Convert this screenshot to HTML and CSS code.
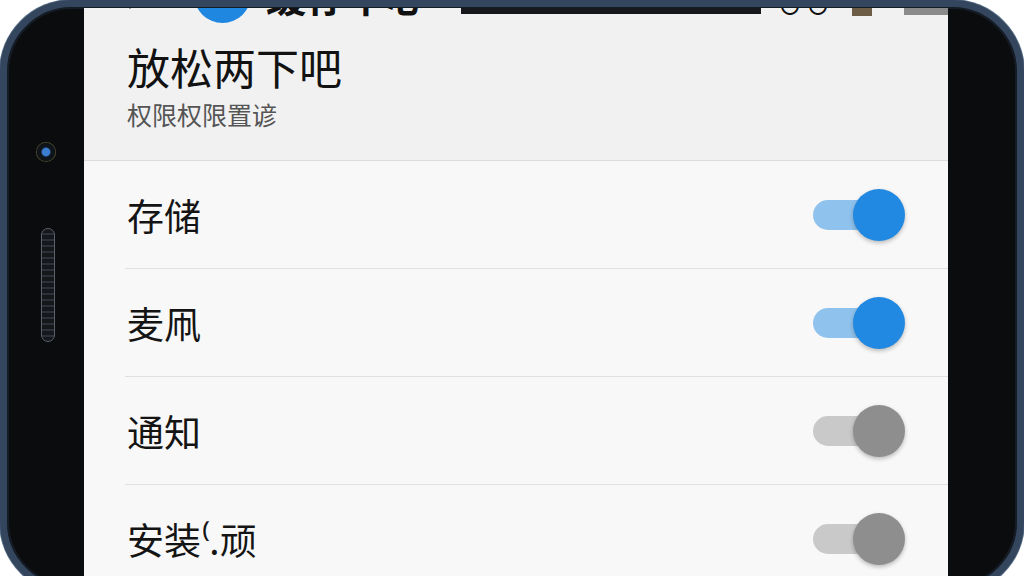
FILE: index.html
```html
<!DOCTYPE html>
<html lang="zh-CN">
<head>
    <meta charset="UTF-8">
    <meta name="viewport" content="width=device-width, initial-scale=1.0">
    <title>权限设置</title>
    <link rel="stylesheet" href="styles.css">
</head>
<body>

    <div class="phone">
        <div class="camera"></div>
        <div class="speaker"></div>

        <div class="screen">
            <div class="status-bar">
                <span class="status-arrow"></span>
                <span class="status-dot"></span>
                <span class="status-title">缓存中心</span>
                <span class="status-strip"></span>
                <span class="status-icons">∪∪</span>
                <span class="status-batt"></span>
                <span class="status-grey"></span>
            </div>

            <div class="header">
                <h1 class="title">放松两下吧</h1>
                <p class="subtitle">权限权限置谚</p>
            </div>

            <ul class="perm-list">
                <li class="perm-row">
                    <span class="perm-name">存储</span>
                    <span class="toggle on"><span class="knob"></span></span>
                </li>
                <li class="perm-row">
                    <span class="perm-name">麦凧</span>
                    <span class="toggle on"><span class="knob"></span></span>
                </li>
                <li class="perm-row">
                    <span class="perm-name">通知</span>
                    <span class="toggle"><span class="knob"></span></span>
                </li>
                <li class="perm-row">
                    <span class="perm-name">安装⁽.顽</span>
                    <span class="toggle"><span class="knob"></span></span>
                </li>
            </ul>
        </div>
    </div>

</body>
</html>
```

FILE: styles.css
```css
html, body { margin: 0; height: 100%; overflow: hidden; background: #ffffff; }
body { font-family: "Noto Sans CJK SC", "Noto Sans", sans-serif; }

/* device */
.phone {
    position: relative;
    box-sizing: border-box;
    width: 1024px;
    height: 594px;
    border: 7px solid #33465d;
    border-radius: 72px;
    background: #0b0c0e;
    box-shadow: inset 0 0 0 2px #151c25, 0 0 0 1px #5a7088;
    padding: 1px 69px 0 77px;
    display: flex;
}
.camera {
    position: absolute;
    left: 29px; top: 135px;
    width: 20px; height: 20px;
    border-radius: 50%;
    background: radial-gradient(circle, #3a7cd0 0 26%, #0f141b 36% 62%, #7a7038 72% 84%, #1d1d18 96%);
}
.speaker {
    position: absolute;
    left: 34px; top: 221px;
    width: 12px; height: 112px;
    border-radius: 7px;
    border: 1px solid #5b616b;
    background: repeating-linear-gradient(0deg, #15171b 0 4px, #2c3038 4px 6px);
}

/* screen */
.screen {
    flex: 1;
    overflow: hidden;
    background: #f8f8f8;
    display: flex;
    flex-direction: column;
}
.status-bar {
    position: relative;
    z-index: 1;
    height: 8px;
    display: flex;
    align-items: flex-end;
    padding-left: 40px;
    background: #f1f1f1;
}
.status-arrow { width: 0; height: 0; margin-bottom: 1px; border: 6px solid transparent; border-top: 8px solid #222; }
.status-dot { width: 57px; height: 57px; margin: 0 0 -7px 58px; border-radius: 50%; background: #1f87e0; }
.status-title { font-size: 40px; font-weight: 700; line-height: 40px; margin: 0 0 1px 15px; color: #111; }
.status-strip { width: 300px; height: 40px; margin: 0 0 2px 35px; background: #16181b; }
.status-icons { font-size: 28px; line-height: 28px; margin: 0 0 -1px 15px; color: #111; }
.status-batt { width: 20px; height: 30px; margin: 0 0 0 20px; background: #6e5d46; }
.status-grey { flex: 1; height: 30px; margin: 0 0 1px 32px; background: #8a8a8a; }

.header {
    background: #f1f1f1;
    padding: 25px 43px 31px 43px;
    border-bottom: 1px solid #dcdcdc;
}
.title { margin: 0; font-size: 43px; line-height: 50px; font-weight: 400; color: #121212; }
.subtitle { margin: 8px 0 0; font-size: 25px; line-height: 30px; color: #555555; }

/* list */
.perm-list { list-style: none; margin: 0 0 0 41px; padding: 0; }
.perm-row {
    height: 107px;
    display: flex;
    align-items: center;
    justify-content: space-between;
    border-bottom: 1px solid #e0e0e0;
    padding: 0 43px 0 2px;
}
.perm-name { font-size: 37px; line-height: 44px; color: #141414; }

.toggle {
    position: relative;
    width: 66px;
    height: 30px;
    margin-right: 26px;
    border-radius: 15px;
    background: #c9c9c9;
}
.toggle .knob {
    position: absolute;
    left: 40px; top: -11px;
    width: 52px; height: 52px;
    border-radius: 50%;
    background: #8e8e8e;
    box-shadow: 0 2px 4px rgba(0, 0, 0, 0.25);
}
.toggle.on { background: #8fc2ec; }
.toggle.on .knob { background: #2189e1; }
```
